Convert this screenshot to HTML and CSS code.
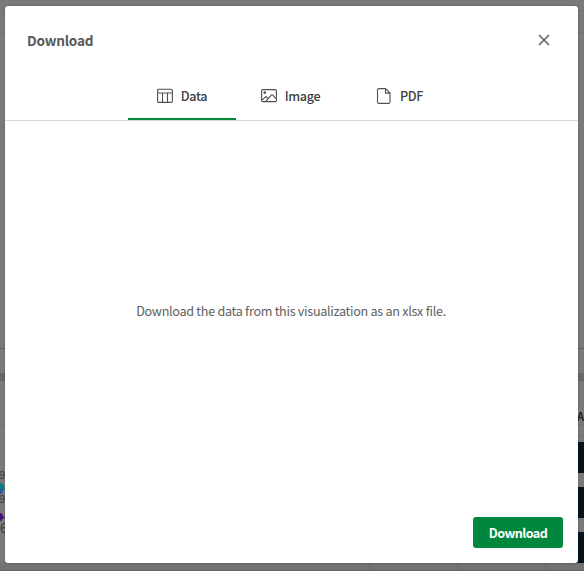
FILE: index.html
```html
<!DOCTYPE html>
<html lang="en">
<head>
<meta charset="utf-8">
<title>Download</title>
<link rel="stylesheet" href="styles.css">
</head>
<body>
<svg class="backdrop" width="584" height="571" viewBox="0 0 584 571" aria-hidden="true">
  <path d="M0 10.5H584M0 32.5H584M0 424.5H584M0 436.5H584" stroke="#717171"/>
  <path d="M0 348.5H584" stroke="#606060"/>
  <path d="M0 370.5H584" stroke="#747474"/>
  <rect y="373" width="584" height="8" fill="#676767"/>
  <rect y="563" width="584" height="8" fill="#727272"/>
  <path d="M369.5 563V571M457.5 563V571M545.5 563V571" stroke="#686868"/>
  <path d="M0 570.5H584" stroke="#686868"/>
  <path d="M570 442H584V473H570zM570 487H584V518H570zM570 532H584V563H570z" fill="#02121f"/>
  <text class="column-label" x="577" y="421">A</text>
  <text class="tick" x="-1" y="479">9</text>
  <text class="tick" x="-1" y="503">9</text>
  <text class="tick tick-large" x="0" y="533">6</text>
  <circle cx="0" cy="487" r="4" fill="#087f83"/>
  <circle cx="0" cy="491" r="3" fill="#2d58a0"/>
  <path d="M0 488.5H6" stroke="#087f83"/>
  <circle cx="-1" cy="517" r="4" fill="#451276"/>
  <path d="M0 517.5H6" stroke="#451276"/>
</svg>
<main class="dialog" role="dialog">
  <header class="header">
    <h1>Download</h1>
    <button class="close" aria-label="Close"><svg width="12" height="12" viewBox="0 0 12 12"><path d="M1 1L11 11M11 1L1 11" stroke="#666" stroke-width="1.7"/></svg></button>
  </header>
  <nav class="tabs">
    <button class="tab active">
      <svg width="16" height="16" viewBox="0 0 16 16"><path d="M.6 13V2.4Q.6 1.2 1.8 1.2H14.2Q15.4 1.2 15.4 2.4V13Q15.4 14.4 14.2 14.4H1.8Q.6 14.4.6 13M.6 5H15.4M5.5 5V14.4M10.5 5V14.4"/></svg>
      <span>Data</span>
    </button>
    <button class="tab image-tab">
      <svg width="16" height="16" viewBox="0 0 16 16"><rect x=".6" y="1.6" width="14.8" height="12" rx="1"/><path d="M1 12.2L5 8.6L7.2 10.6M4.8 13.4L10 7.4Q11 6.2 12 7.4L15 10.6"/><circle cx="3.7" cy="4.7" r=".8"/></svg>
      <span>Image</span>
    </button>
    <button class="tab pdf-tab">
      <svg width="16" height="16" viewBox="0 0 16 16"><path d="M2.8.6H9.5L14 5.1V14Q14 15.4 12.6 15.4H2.9Q1.5 15.4 1.5 14V2Q1.5.6 2.9.6M9.5.6V5.1H14"/></svg>
      <span>PDF</span>
    </button>
  </nav>
  <section class="content"><p>Download the data from this visualization as an xlsx file.</p></section>
  <footer class="footer"><button class="download">Download</button></footer>
</main>
</body>
</html>
```
FILE: styles.css
```css
* { box-sizing: border-box; }
body {
  margin: 0;
  width: 584px;
  height: 571px;
  padding: 6px 6px 8px 5px;
  overflow: hidden;
  background: #7a7a7a;
  font-family: "Noto Sans CJK SC", sans-serif;
  color: #404040;
}
button { border: 0; padding: 0; background: none; font: inherit; color: inherit; }
svg { display: block; flex: none; }
.backdrop { position: absolute; inset: 0; z-index: -1; }
.column-label { font-size: 11px; font-weight: 700; fill: #202020; }
.tick { font-size: 11px; fill: #3d3d3d; }
.tick-large { font-size: 13px; }
.dialog {
  height: 557px;
  display: flex;
  flex-direction: column;
  background: #fff;
  border-radius: 3px;
  box-shadow: 0 0 2px rgba(0, 0, 0, .35);
}
.header {
  height: 68px;
  display: flex;
  align-items: center;
  justify-content: space-between;
  padding: 0 28px 0 22px;
}
.header h1 { margin: 0; font-size: 13.6px; letter-spacing: -.2px; line-height: 20px; font-weight: 700; color: #595959; }
.tabs {
  height: 47px;
  display: flex;
  padding-left: 123px;
  border-bottom: 1px solid #d9d9d9;
}
.tab {
  width: 108px;
  height: 46px;
  display: flex;
  align-items: center;
  justify-content: center;
  gap: 8px;
  font-size: 12.6px;
  font-weight: 500;
  letter-spacing: -.35px;
  line-height: 20px;
  border-bottom: 2px solid transparent;
}
.tab span { margin-top: -1px; }
.image-tab { padding-left: 1px; }
.pdf-tab { padding-left: 3px; }
.tab.active { border-bottom-color: #008936; }
.tab svg { fill: none; stroke: #505050; stroke-width: 1.1; }
.content { flex: 1; display: flex; align-items: center; justify-content: center; }
.content p { margin: -2px 1px 0 0; font-size: 12.6px; letter-spacing: -.28px; line-height: 20px; color: #606060; white-space: nowrap; }
.footer { height: 61px; display: flex; justify-content: flex-end; padding: 15px 15px 0 0; }
.download {
  width: 90px;
  height: 31px;
  border-radius: 3px;
  background: #00873d;
  color: #fff;
  font-size: 12.6px;
  font-weight: 700;
  letter-spacing: -.55px;
  line-height: 20px;
}
```
